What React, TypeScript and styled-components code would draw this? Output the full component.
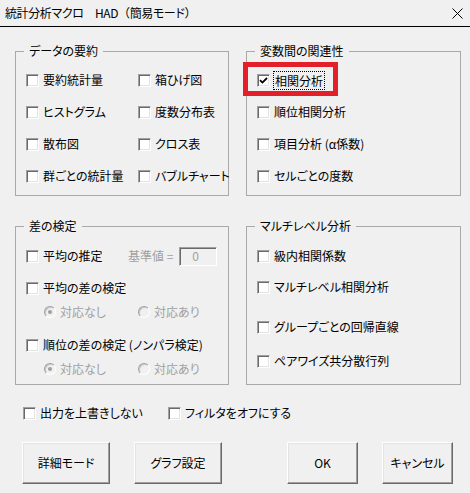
import styled, { createGlobalStyle } from 'styled-components'

const GlobalStyle = createGlobalStyle`
  html, body {
    margin: 0;
    padding: 0;
    background: #f0f0f0;
  }
`

const Dialog = styled.div`
  width: 470px;
  height: 493px;
  background: #f0f0f0;
  font-family: "Noto Sans CJK JP", "Noto Sans", sans-serif;
  font-size: 12px;
  line-height: 16px;
  font-feature-settings: "palt";
  color: #000;
  display: flex;
  flex-direction: column;
  overflow: hidden;
`

const TitleBar = styled.div`
  height: 26px;
  flex: none;
  display: flex;
  align-items: center;
  justify-content: space-between;
  padding: 0 7px 0 5px;
  border-bottom: 1px solid #000;
`

const TitleText = styled.span`
  letter-spacing: -0.4px;
`

const Paren = styled.span`
  font-feature-settings: normal;
`

const Body = styled.div`
  display: flex;
  flex-direction: column;
  padding: 16px 10px 0 15px;
`

const GroupGrid = styled.div<{ $top: number }>`
  display: grid;
  grid-template-columns: 214px 215px;
  column-gap: 17px;
  margin-top: ${p => p.$top}px;
`

const Group = styled.fieldset<{ $pb: number }>`
  box-sizing: border-box;
  margin: 0;
  min-width: 0;
  padding: 0 10px ${p => p.$pb}px;
  border: 1px solid #a9a9a9;
`

const Legend = styled.legend`
  padding: 0 5px;
  margin-left: -2px;
  line-height: 16px;
`

const CheckGrid = styled.div<{ $cols: string }>`
  display: grid;
  grid-template-columns: ${p => p.$cols};
  grid-auto-rows: 32px;
  padding-top: 5px;
`

const Stack = styled.div`
  display: flex;
  flex-direction: column;
  padding-top: 12px;
`

const Row = styled.div<{ $mt?: number; $cols?: string; $pl?: number }>`
  display: grid;
  grid-template-columns: ${p => p.$cols || '1fr'};
  height: 20px;
  margin-top: ${p => p.$mt || 0}px;
  padding-left: ${p => p.$pl || 0}px;
`

const CheckItem = styled.label<{ $disabled?: boolean }>`
  position: relative;
  display: flex;
  align-items: center;
  gap: 4px;
  white-space: nowrap;
  color: ${p => (p.$disabled ? '#a0a0a0' : '#000')};
`

const Box = styled.span`
  flex: none;
  box-sizing: border-box;
  width: 13px;
  height: 13px;
  background: #fff;
  border: 1px solid;
  border-color: #a0a0a0 #fff #fff #a0a0a0;
  box-shadow: inset 1px 1px #696969, inset -1px -1px #e3e3e3;
  display: flex;
  align-items: center;
  justify-content: center;
`

const Radio = styled.span<{ $checked?: boolean }>`
  flex: none;
  box-sizing: border-box;
  width: 12px;
  height: 12px;
  border-radius: 50%;
  border: 1px solid;
  border-color: #a0a0a0 #fff #fff #a0a0a0;
  background: #f0f0f0;
  box-shadow: inset 1px 1px #c8c8c8;
  display: flex;
  align-items: center;
  justify-content: center;

  &::after {
    content: '';
    display: ${p => (p.$checked ? 'block' : 'none')};
    width: 4px;
    height: 4px;
    border-radius: 50%;
    background: #a0a0a0;
  }
`

const FocusText = styled.span`
  outline: 1px dotted #000;
  padding: 0 1px;
  line-height: 17px;
`

const RedMark = styled.span`
  position: absolute;
  left: -14px;
  top: -2px;
  width: 95px;
  height: 34px;
  box-sizing: border-box;
  border: 5px solid #e3202a;
  pointer-events: none;
`

const BaseValue = styled.div`
  display: flex;
  align-items: center;
  gap: 6px;
  color: #a0a0a0;
`

const ValueInput = styled.span`
  box-sizing: border-box;
  width: 38px;
  height: 19px;
  border: 1px solid;
  border-color: #a0a0a0 #fff #fff #a0a0a0;
  box-shadow: inset 1px 1px #696969;
  background: #f0f0f0;
  color: #a0a0a0;
  padding-left: 12px;
  line-height: 16px;
`

const ButtonRow = styled.div`
  display: flex;
  margin-top: 19px;
  padding-left: 7px;
`

const Button = styled.button<{ $w: number; $ml?: number }>`
  box-sizing: border-box;
  width: ${p => p.$w}px;
  height: 42px;
  margin-left: ${p => p.$ml || 0}px;
  padding: 0;
  font: inherit;
  color: #000;
  background: #f0f0f0;
  border: 1px solid;
  border-color: #fff #696969 #696969 #fff;
  box-shadow: inset -1px -1px #a0a0a0, inset 1px 1px #e3e3e3;
`

const Check = ({ checked }: { checked?: boolean }) => (
  <Box>
    {checked && (
      <svg width="9" height="9" viewBox="0 0 9 9">
        <path d="M1 4.2 L3.4 6.6 L8 2" fill="none" stroke="#000" strokeWidth="1.8" />
      </svg>
    )}
  </Box>
)

const CB = ({ label, checked }: { label: string; checked?: boolean }) => (
  <CheckItem>
    <Check checked={checked} />
    {label}
  </CheckItem>
)

const RadioPair = ({ mt }: { mt: number }) => (
  <Row $mt={mt} $cols="94px auto" $pl={18}>
    <CheckItem $disabled>
      <Radio $checked />
      対応なし
    </CheckItem>
    <CheckItem $disabled>
      <Radio />
      対応あり
    </CheckItem>
  </Row>
)

export default function App() {
  return (
    <Dialog>
      <GlobalStyle />
      <TitleBar>
        <TitleText>
          統計分析マクロ　HAD<Paren>（</Paren>簡易モード<Paren>）</Paren>
        </TitleText>
        <svg width="11" height="11" viewBox="0 0 11 11">
          <path d="M0.5 0.5 L10.5 10.5 M10.5 0.5 L0.5 10.5" stroke="#000" strokeWidth="1" />
        </svg>
      </TitleBar>
      <Body>
        <GroupGrid $top={0}>
          <Group $pb={3}>
            <Legend>データの要約</Legend>
            <CheckGrid $cols="112px auto">
              <CB label="要約統計量" />
              <CB label="箱ひげ図" />
              <CB label="ヒストグラム" />
              <CB label="度数分布表" />
              <CB label="散布図" />
              <CB label="クロス表" />
              <CB label="群ごとの統計量" />
              <CB label="バブルチャート" />
            </CheckGrid>
          </Group>
          <Group $pb={3}>
            <Legend>変数間の関連性</Legend>
            <CheckGrid $cols="1fr">
              <CheckItem>
                <RedMark />
                <Check checked />
                <FocusText>相関分析</FocusText>
              </CheckItem>
              <CB label="順位相関分析" />
              <CB label="項目分析 (α係数)" />
              <CB label="セルごとの度数" />
            </CheckGrid>
          </Group>
        </GroupGrid>

        <GroupGrid $top={22}>
          <Group $pb={5}>
            <Legend>差の検定</Legend>
            <Stack>
              <Row $cols="102px auto">
                <CB label="平均の推定" />
                <BaseValue>
                  基準値 =
                  <ValueInput>0</ValueInput>
                </BaseValue>
              </Row>
              <Row $mt={12}>
                <CB label="平均の差の検定" />
              </Row>
              <RadioPair mt={4} />
              <Row $mt={13}>
                <CB label="順位の差の検定 (ノンパラ検定)" />
              </Row>
              <RadioPair mt={4} />
            </Stack>
          </Group>
          <Group $pb={13}>
            <Legend>マルチレベル分析</Legend>
            <Stack>
              <Row>
                <CB label="級内相関係数" />
              </Row>
              <Row $mt={11}>
                <CB label="マルチレベル相関分析" />
              </Row>
              <Row $mt={20}>
                <CB label="グループごとの回帰直線" />
              </Row>
              <Row $mt={14}>
                <CB label="ペアワイズ共分散行列" />
              </Row>
            </Stack>
          </Group>
        </GroupGrid>

        <Row $mt={18} $cols="145px auto" $pl={8}>
          <CB label="出力を上書きしない" />
          <CB label="フィルタをオフにする" />
        </Row>

        <ButtonRow>
          <Button $w={88}>詳細モード</Button>
          <Button $w={88} $ml={24}>グラフ設定</Button>
          <Button $w={71} $ml={65}>OK</Button>
          <Button $w={71} $ml={24}>キャンセル</Button>
        </ButtonRow>
      </Body>
    </Dialog>
  )
}
